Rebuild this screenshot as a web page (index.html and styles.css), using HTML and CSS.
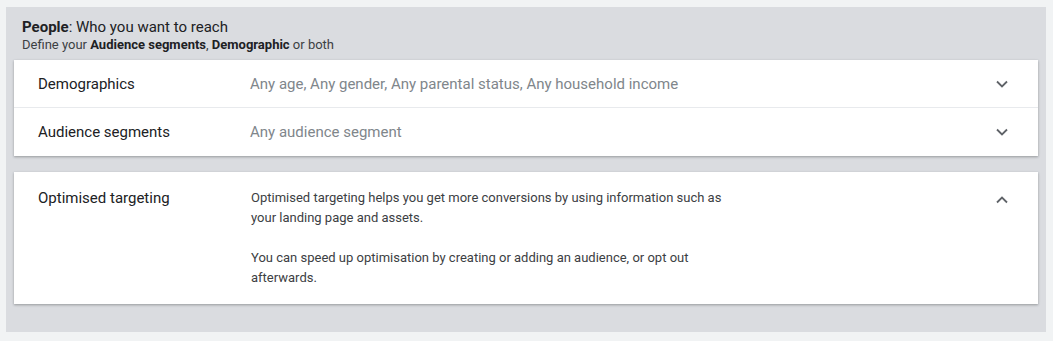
FILE: index.html
```html
<!doctype html>
<html>
<head>
<meta charset="utf-8">
<title>People targeting</title>
<link rel="stylesheet" href="styles.css">
</head>
<body>
	<div class="panel">
		<div class="panel-head">
			<div class="panel-title"><b>People</b>: Who you want to reach</div>
			<div class="panel-sub">Define your <b>Audience segments</b>, <b>Demographic</b> or both</div>
		</div>

		<div class="card">
			<div class="row">
				<div class="row-label">Demographics</div>
				<div class="row-value">Any age, Any gender, Any parental status, Any household income</div>
				<svg class="chev" width="12" height="8" viewBox="0 0 12 8"><path d="M1 1.5l5 5 5-5" fill="none" stroke="#5f6368" stroke-width="1.8"/></svg>
			</div>
			<div class="row">
				<div class="row-label">Audience segments</div>
				<div class="row-value">Any audience segment</div>
				<svg class="chev" width="12" height="8" viewBox="0 0 12 8"><path d="M1 1.5l5 5 5-5" fill="none" stroke="#5f6368" stroke-width="1.8"/></svg>
			</div>
		</div>

		<div class="card card-open">
			<div class="row row-open">
				<div class="row-label">Optimised targeting</div>
				<div class="row-desc">
					<p>Optimised targeting helps you get more conversions by using information such as your landing page and assets.</p>
					<p>You can speed up optimisation by creating or adding an audience, or opt out afterwards.</p>
				</div>
				<svg class="chev chev-up" width="12" height="8" viewBox="0 0 12 8"><path d="M1 6.5l5-5 5 5" fill="none" stroke="#5f6368" stroke-width="1.8"/></svg>
			</div>
		</div>
	</div>
</body>
</html>
```

FILE: styles.css
```css
*{
	margin:0;
	padding:0;
	box-sizing:border-box;
}
body{
	background:#f1f3f4;
	font-family:Roboto, "Noto Sans", Arial, sans-serif;
	color:#202124;
	padding:7px 7px 10px 6px;
}
.panel{
	background:#dadce0;
	padding:0 8px 28px 8px;
}
.panel-head{
	padding:11px 8px 8px 8px;
}
.panel-title{
	font-size:15px;
	line-height:19px;
	color:#202124;
}
.panel-title b{ font-weight:700; }
.panel-sub{
	font-size:13px;
	line-height:15px;
	color:#3c4043;
}
.panel-sub b{ font-weight:700; color:#202124; }
.card{
	background:#fff;
	box-shadow:0 1px 2px rgba(60,64,67,.3), 0 1px 3px rgba(60,64,67,.15);
}
.card-open{
	margin-top:16px;
}
.row{
	display:flex;
	align-items:center;
	height:48px;
	padding:0 30px 0 24px;
	border-bottom:1px solid #e8eaed;
}
.row:last-child{ border-bottom:0; }
.row-label{
	width:212px;
	font-size:15px;
	color:#202124;
	flex-shrink:0;
}
.row-value{
	flex:1;
	font-size:15px;
	color:#80868b;
}
.chev{ flex-shrink:0; }
.row-open{
	height:auto;
	align-items:flex-start;
	padding-top:16px;
	padding-bottom:16px;
}
.row-open .row-label{ line-height:20px; }
.row-desc{
	flex:1;
	font-size:13px;
	line-height:20px;
	color:#3c4043;
	padding-left:1px;
}
.row-desc p{
	max-width:475px;
}
.row-desc p + p{ margin-top:20px; }
.chev-up{ margin-top:8px; }
```
